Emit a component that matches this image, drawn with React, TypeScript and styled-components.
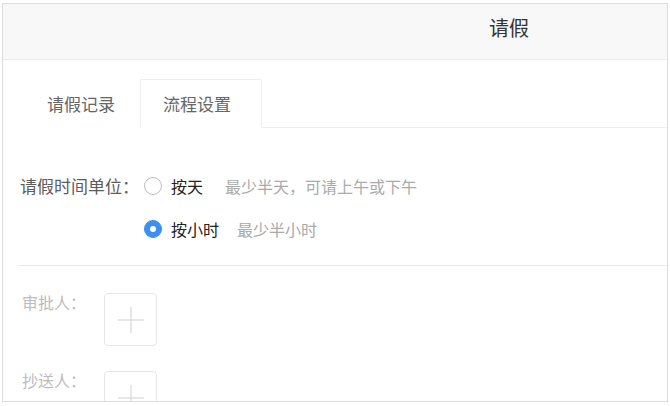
import styled, { createGlobalStyle } from 'styled-components';

const GlobalStyle = createGlobalStyle`
  html, body {
    margin: 0;
    padding: 0;
    background: #fff;
  }
  body {
    font-family: "Noto Sans CJK SC", "Noto Sans", sans-serif;
  }
`;

const Frame = styled.div`
  box-sizing: border-box;
  width: 666px;
  height: 399px;
  margin: 3px 0 0 2px;
  border: 1px solid #dcdcdc;
  overflow: hidden;
  background: #fff;
`;

const Header = styled.header`
  height: 56px;
  display: flex;
  align-items: center;
  padding: 0 0 7px 486px;
  box-sizing: border-box;
  background: #f8f8f8;
  border-bottom: 1px solid #ececec;
`;

const Title = styled.h1`
  margin: 0;
  font-size: 20px;
  font-weight: 400;
  color: #333;
  line-height: 1;
`;

const TabBar = styled.nav`
  display: flex;
  height: 48px;
  margin: 19px 0 0 12px;
  border-bottom: 1px solid #efefef;
`;

const Tab = styled.div<{ $active?: boolean; $pad: number }>`
  display: flex;
  align-items: center;
  width: ${(p) => (p.$active ? '122px' : '125px')};
  padding-left: ${(p) => p.$pad}px;
  box-sizing: border-box;
  font-size: 17px;
  color: #666;
  background: #fff;
  margin-bottom: -1px;
  border: 1px solid ${(p) => (p.$active ? '#efefef' : 'transparent')};
  border-bottom-color: ${(p) => (p.$active ? '#fff' : 'transparent')};
`;

const Form = styled.section`
  padding: 36px 0 0 17px;
`;

const Row = styled.div`
  display: flex;
  align-items: center;
  height: 43px;
`;

const Label = styled.div`
  width: 124px;
  flex: none;
  font-size: 17px;
  color: #5c5c5c;
`;

const Radio = styled.span<{ $checked?: boolean }>`
  box-sizing: border-box;
  width: 18px;
  height: 18px;
  border-radius: 50%;
  flex: none;
  display: flex;
  align-items: center;
  justify-content: center;
  border: 1px solid ${(p) => (p.$checked ? '#3a8ff0' : '#bdbdbd')};
  background: ${(p) => (p.$checked ? '#3a8ff0' : '#fff')};

  &::after {
    content: '';
    width: 6px;
    height: 6px;
    border-radius: 50%;
    background: ${(p) => (p.$checked ? '#fff' : 'transparent')};
  }
`;

const Option = styled.span`
  margin-left: 9px;
  font-size: 16px;
  color: #222;
`;

const Hint = styled.span<{ $gap: number }>`
  margin-left: ${(p) => p.$gap}px;
  font-size: 16px;
  color: #aaa;
`;

const Indent = styled.div`
  width: 124px;
  flex: none;
`;

const Divider = styled.hr`
  margin: 15px 0 0 15px;
  border: 0;
  border-top: 1px solid #ececec;
`;

const People = styled.section`
  display: flex;
  flex-direction: column;
  gap: 25px;
  padding: 27px 0 0 19px;
`;

const PersonRow = styled.div`
  display: flex;
  align-items: flex-start;
`;

const PersonLabel = styled.div`
  width: 82px;
  flex: none;
  font-size: 16px;
  line-height: 18px;
  color: #bbb;
`;

const AddBox = styled.div`
  box-sizing: border-box;
  width: 53px;
  height: 53px;
  border: 1px solid #e6e6e6;
  border-radius: 4px;
  display: flex;
  align-items: center;
  justify-content: center;
`;

const Plus = () => (
  <svg width="28" height="28" viewBox="0 0 28 28">
    <path d="M14 1v26M1 14h26" stroke="#cfcfcf" strokeWidth="1" fill="none" />
  </svg>
);

export default function App() {
  return (
    <>
      <GlobalStyle />
      <Frame>
        <Header>
          <Title>请假</Title>
        </Header>
        <TabBar>
          <Tab $pad={31}>请假记录</Tab>
          <Tab $active $pad={22}>流程设置</Tab>
        </TabBar>
        <Form>
          <Row>
            <Label>请假时间单位：</Label>
            <Radio />
            <Option>按天</Option>
            <Hint $gap={22}>最少半天，可请上午或下午</Hint>
          </Row>
          <Row>
            <Indent />
            <Radio $checked />
            <Option>按小时</Option>
            <Hint $gap={18}>最少半小时</Hint>
          </Row>
        </Form>
        <Divider />
        <People>
          <PersonRow>
            <PersonLabel>审批人：</PersonLabel>
            <AddBox>
              <Plus />
            </AddBox>
          </PersonRow>
          <PersonRow>
            <PersonLabel>抄送人：</PersonLabel>
            <AddBox>
              <Plus />
            </AddBox>
          </PersonRow>
        </People>
      </Frame>
    </>
  );
}
